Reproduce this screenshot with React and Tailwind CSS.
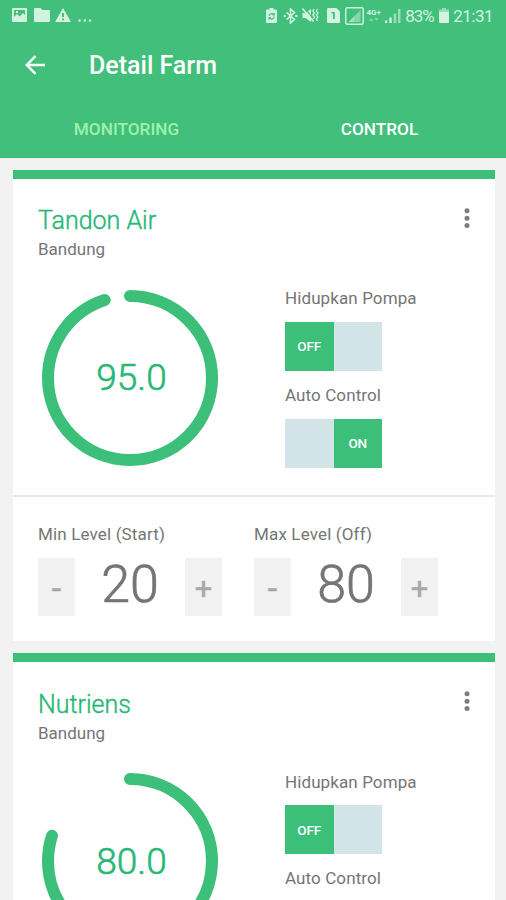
import React from "react";

const farms = [
  { name: "Tandon Air", city: "Bandung", level: 95, pump: false, auto: true, min: 20, max: 80 },
  { name: "Nutriens", city: "Bandung", level: 80, pump: false, auto: true, min: 20, max: 80 },
];

function StatusBar() {
  return (
    <div className="flex h-8 items-center justify-between pl-3 pr-[13px] text-[#d3f3e1]">
      <div className="flex items-center pb-[3px]">
        <svg width="15" height="14" viewBox="0 0 15 14" fill="currentColor" fillRule="evenodd">
          <path d="M1 0h13a1 1 0 0 1 1 1v12a1 1 0 0 1-1 1H1a1 1 0 0 1-1-1V1a1 1 0 0 1 1-1zM2 2v7l3-3 2.500 2.500L11 5l2 2V2zM4 3h2v2H4z" />
        </svg>
        <svg className="ml-[7px]" width="16" height="14" viewBox="0 0 16 14" fill="currentColor">
          <path d="M1 0h5.500l2 2H15a1 1 0 0 1 1 1v10a1 1 0 0 1-1 1H1a1 1 0 0 1-1-1V1a1 1 0 0 1 1-1z" />
        </svg>
        <svg className="ml-[5px]" width="16" height="14" viewBox="0 0 16 14" fill="currentColor" fillRule="evenodd">
          <path d="M8 0l8 14H0zM7 5v4h2V5zM7 10.500v1.800h2v-1.800z" />
        </svg>
        <svg className="ml-[7px]" width="14" height="14" viewBox="0 0 14 14" fill="currentColor">
          <circle cx="1.500" cy="12.500" r="1.200" />
          <circle cx="6.800" cy="12.500" r="1.200" />
          <circle cx="12" cy="12.500" r="1.200" />
        </svg>
      </div>
      <div className="flex items-center pb-px">
        <svg width="11" height="15" viewBox="0 0 11 15">
          <path d="M3.500 0h4v1.500H10a1 1 0 0 1 1 1V14a1 1 0 0 1-1 1H1a1 1 0 0 1-1-1V2.500a1 1 0 0 1 1-1h2.500z" fill="currentColor" />
          <path d="M3 8a2.600 2.600 0 0 1 4.700-1.300M8.200 8.500a2.600 2.600 0 0 1-4.800 1.300M8.200 5v2H6.300M3 11.500v-2h2" fill="none" stroke="#41bf7b" strokeWidth="1.200" />
        </svg>
        <svg className="ml-[6px]" width="15" height="16" viewBox="0 0 15 16" fill="none" stroke="currentColor" strokeWidth="1.600">
          <path d="M3.500 4.500l8 7L7.500 15V1l4 3.500-8 7" />
          <path d="M0.500 8h2.200M12.300 8h2.200" strokeWidth="2" />
        </svg>
        <svg className="ml-[4px]" width="17" height="15" viewBox="0 0 17 15" fill="none" stroke="currentColor">
          <path d="M0.500 5h3L9 1v13l-5.500-4h-3z" fill="currentColor" stroke="none" />
          <path d="M1.500 0.500l10 13" stroke="#41bf7b" strokeWidth="1.200" transform="translate(1 -0.800)" />
          <path d="M0.500 0.500l11 13" strokeWidth="1.600" />
          <path d="M12 1l-1.200 2 1.700 2-1.700 2 1.700 2-1.200 2M15.500 1l-1.200 2 1.700 2-1.700 2 1.700 2-1.700 2 1.200 2" strokeWidth="1.200" />
        </svg>
        <svg className="ml-[8px]" width="13" height="15" viewBox="0 0 13 15" fill="currentColor" fillRule="evenodd">
          <path d="M1 0h8.500L13 3.500V14a1 1 0 0 1-1 1H1a1 1 0 0 1-1-1V1a1 1 0 0 1 1-1zM4.500 4v1.500H6V11h1.800V4z" />
        </svg>
        <svg className="ml-[5px]" width="19" height="18" viewBox="0 0 19 18" fill="none">
          <rect x="0.750" y="0.750" width="17.500" height="16.500" rx="1.500" stroke="currentColor" strokeWidth="1.400" />
          <path d="M15.500 3v12H3.500z" fill="currentColor" opacity="0.450" />
          <path d="M9 9.500V15H3.500z" fill="currentColor" opacity="0.400" />
        </svg>
        <div className="ml-px flex h-[14px] w-[17px] flex-col items-center">
          <span className="text-[8px] font-bold leading-[8px]">4G+</span>
          <svg width="10" height="5" viewBox="0 0 10 5" fill="currentColor" opacity="0.400">
            <path d="M0 3l2-2 2 2v1H0zM5.500 1h4v1l-2 2-2-2z" />
          </svg>
        </div>
        <svg className="ml-[3px]" width="16" height="14" viewBox="0 0 16 14" fill="currentColor">
          <path d="M0 11.500h2.200V14H0z" />
          <path d="M4.300 8.500h2.400V14H4.300z" />
          <path d="M8.700 4.500h2.500V14H8.700z" opacity="0.600" />
          <path d="M13 0h2.500v14H13z" opacity="0.600" />
        </svg>
        <span className="ml-[4px] w-[29px] whitespace-nowrap text-[17px] leading-5 tracking-[-1px]">83%</span>
        <svg className="ml-[5px]" width="10" height="15" viewBox="0 0 10 15" fill="currentColor">
          <path d="M3 0h4v1.500h2a1 1 0 0 1 1 1V4H0V2.500a1 1 0 0 1 1-1h2z" opacity="0.600" />
          <path d="M0 4h10v10a1 1 0 0 1-1 1H1a1 1 0 0 1-1-1z" />
        </svg>
        <span className="ml-[4px] whitespace-nowrap text-[17px] leading-5 tracking-[-0.500px]">21:31</span>
      </div>
    </div>
  );
}

function Header() {
  return (
    <header className="h-[158px] border-b border-[#35b873] bg-[#41bf7b]">
      <StatusBar />
      <div className="flex h-[66px] items-center pl-[25px]">
        <svg className="mb-px" width="21" height="20" viewBox="0 0 21 20" fill="none" stroke="#fff" strokeWidth="2.400">
          <path d="M20 10H2.500M10.500 1.200L1.800 10l8.700 8.800" />
        </svg>
        <h1 className="ml-[43px] mt-0.5 text-[25px] font-medium leading-[30px] text-white">Detail Farm</h1>
      </div>
      <div className="grid grid-cols-2 pt-[19px] text-center text-[17.200px] font-medium leading-6">
        <div className="text-[#9df2ab]">MONITORING</div>
        <div className="text-white">CONTROL</div>
      </div>
    </header>
  );
}

function Ring({ value }) {
  return (
    <svg width="176" height="176" viewBox="0 0 176 176" fill="none">
      <circle
        cx="88"
        cy="88"
        r="82"
        pathLength="100"
        stroke="#3cbf78"
        strokeWidth="12"
        strokeLinecap="round"
        strokeDasharray={`${value} 100`}
        transform="rotate(-90 88 88)"
      />
    </svg>
  );
}

function Toggle({ on }) {
  return (
    <button className="flex h-[49px] w-[97px] bg-[#d2e4e8] text-[13.500px] font-medium tracking-[-0.100px] text-white">
      {on && <span className="w-[48.500px]" />}
      <span className="flex h-full w-[48.500px] items-center justify-center bg-[#3cbf78]">
        {on ? "ON" : "OFF"}
      </span>
    </button>
  );
}

function Stepper({ label, value }) {
  return (
    <div className="w-[216px]">
      <div className="whitespace-nowrap text-[17px] leading-6 tracking-[0.150px]">{label}</div>
      <div className="mt-3 flex h-[58px] w-[184px] items-stretch justify-between">
        <button className="flex w-[37px] items-center justify-center bg-[#f2f2f2] pt-0.5 text-[#a8a8a8]">
          <span className="text-[34px] leading-none [-webkit-text-stroke:0.5px]">-</span>
        </button>
        <span className="text-[52px] font-light leading-[53px] [-webkit-text-stroke:0.7px]">{value}</span>
        <button className="flex w-[37px] items-center justify-center bg-[#f2f2f2] pt-0.5 text-[#a8a8a8]">
          <span className="text-[31px] leading-none [-webkit-text-stroke:0.3px]">+</span>
        </button>
      </div>
    </div>
  );
}

function FarmCard({ farm }) {
  return (
    <section className="h-[471.400px] bg-white">
      <div className="h-[8.500px] bg-[#3cbf78]" />
      <div className="h-[318px] border-b-2 border-[#e9e9e9] pl-[25px] pr-[25px] pt-[28.900px]">
        <div className="flex justify-between">
          <div>
            <h2 className="pb-[1.600px] text-[25px] font-light leading-[28.400px] text-[#27b777] [-webkit-text-stroke:0.4px]">
              {farm.name}
            </h2>
            <p className="text-[17px] leading-6">{farm.city}</p>
          </div>
          <svg className="mt-[0.500px]" width="6" height="20" viewBox="0 0 6 20" fill="#7d7d7d">
            <circle cx="3" cy="2.800" r="2.500" />
            <circle cx="3" cy="10.200" r="2.500" />
            <circle cx="3" cy="17.500" r="2.500" />
          </svg>
        </div>
        <div className="mt-[25px] flex">
          <div className="ml-1 mt-[3.600px] grid h-[176px] w-[176px] place-items-center *:col-start-1 *:row-start-1">
            <Ring value={farm.level} />
            <span className="ml-[3px] text-[37px] font-light leading-none text-[#27b777] [-webkit-text-stroke:0.6px]">
              {farm.level.toFixed(1)}
            </span>
          </div>
          <div className="ml-[67px] text-[17px] leading-6 tracking-[0.100px]">
            <div>Hidupkan Pompa</div>
            <div className="mt-[11.500px]">
              <Toggle on={farm.pump} />
            </div>
            <div className="mt-3">Auto Control</div>
            <div className="mt-3">
              <Toggle on={farm.auto} />
            </div>
          </div>
        </div>
      </div>
      <div className="flex pl-[25px] pt-[25.500px]">
        <Stepper label="Min Level (Start)" value={farm.min} />
        <Stepper label="Max Level (Off)" value={farm.max} />
      </div>
    </section>
  );
}

export default function App() {
  return (
    <div className="h-[900px] w-[506px] overflow-hidden bg-[#f2f2f2] font-['Roboto',sans-serif] text-[#757575]">
      <Header />
      <main className="flex flex-col gap-3 pl-[13px] pr-[11px] pt-3">
        {farms.map((farm) => (
          <FarmCard key={farm.name} farm={farm} />
        ))}
      </main>
    </div>
  );
}
